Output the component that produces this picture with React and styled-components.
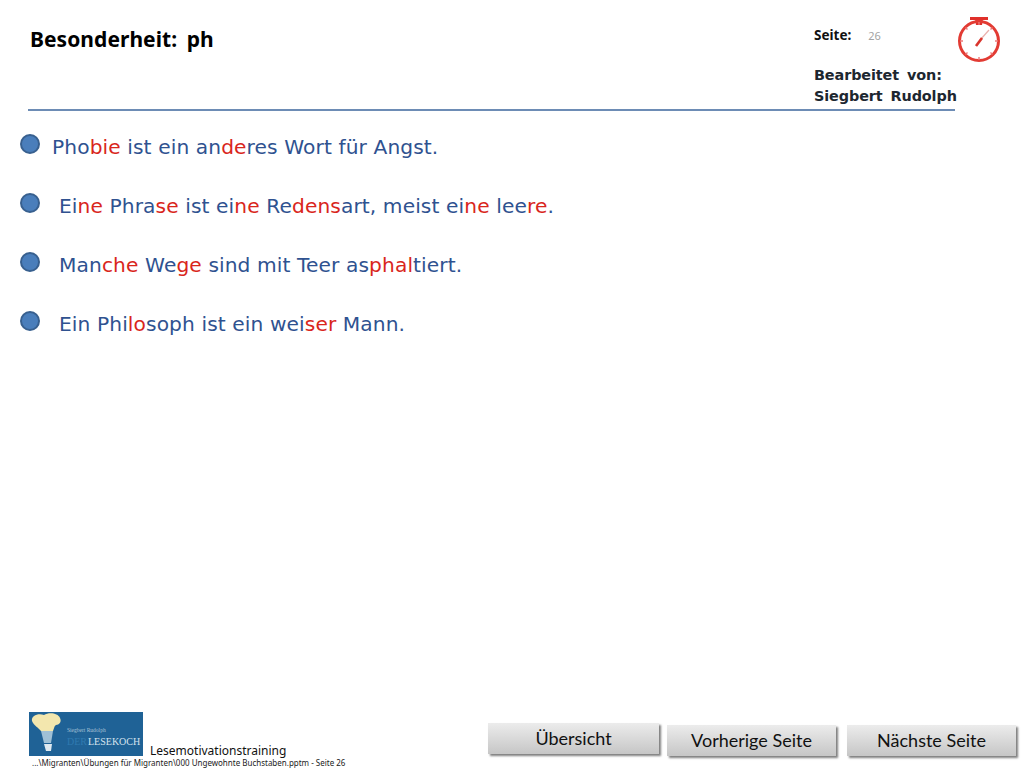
import React from "react";
import styled, { createGlobalStyle } from "styled-components";

const GlobalStyle = createGlobalStyle`
    html, body{
        margin: 0;
        padding: 0;
        background: #fff;
    }
`;

const Page = styled.div`
    display: flex;
    flex-direction: column;
    width: 1024px;
    height: 768px;
    overflow: hidden;
    font-family: "Noto Sans", "Open Sans", sans-serif;
    background: #fff;
`;

const TopBar = styled.header`
    display: flex;
    justify-content: space-between;
    height: 109px;
    padding: 0 23px 0 30px;
    box-sizing: border-box;
`;

const Title = styled.h1`
    margin: 24px 0 0;
    font-size: 21px;
    line-height: 30px;
    font-weight: 700;
    color: #000;
    word-spacing: 4px;
    letter-spacing: 0.05px;
`;

const TopRight = styled.div`
    display: flex;
    gap: 1px;
`;

const Meta = styled.div`
    display: flex;
    flex-direction: column;
    width: 142px;
    padding-top: 25px;
    box-sizing: border-box;
`;

const PageRow = styled.div`
    display: flex;
    align-items: center;
    gap: 17px;
    height: 20px;
    font-size: 13.5px;
    font-weight: 700;
    color: #111;
`;

const PageNumber = styled.span`
    font-size: 11px;
    font-weight: 400;
    color: #a3a3a3;
`;

const Author = styled.div`
    margin-top: 20px;
    font-family: "DejaVu Sans", sans-serif;
    font-size: 14.4px;
    line-height: 20.5px;
    font-weight: 700;
    word-spacing: 3px;
    letter-spacing: -0.1px;
    white-space: nowrap;
    color: #1d2730;
`;

const Timer = styled.svg`
    display: block;
    margin-top: 16px;
    width: 44px;
    height: 48px;
`;

const Rule = styled.div`
    height: 2px;
    width: 927px;
    margin-left: 28px;
    background: #6d8cb5;
`;

const Lines = styled.ul`
    display: flex;
    flex-direction: column;
    flex: 1;
    gap: 29px;
    margin: 0;
    padding: 21px 0 0 20px;
    list-style: none;
`;

const Line = styled.li`
    display: flex;
    align-items: center;
    height: 30px;
    font-family: "DejaVu Sans", sans-serif;
    font-size: 20.2px;
    letter-spacing: 0.1px;
    color: #2f5290;
    white-space: pre;
`;

const Bullet = styled.span`
    flex: none;
    width: 20px;
    height: 20px;
    margin: -6px ${(p) => p.$gap}px 0 0;
    box-sizing: border-box;
    border-radius: 50%;
    border: 2px solid #38608f;
    background: #4a7ebb;
`;

const Red = styled.span`
    color: #d9261c;
`;

const Footer = styled.footer`
    display: flex;
    justify-content: space-between;
    height: 60px;
    padding: 4px 8px 0 29px;
    box-sizing: border-box;
`;

const Brand = styled.div`
    display: grid;
    grid-template-columns: 114px auto;
    column-gap: 7px;
    align-content: start;
`;

const Logo = styled.svg`
    display: block;
    width: 114px;
    height: 44px;
`;

const BrandName = styled.span`
    align-self: end;
    font-size: 12px;
    line-height: 14px;
    color: #111;
    margin-bottom: -2px;
`;

const FilePath = styled.span`
    grid-column: 1 / 3;
    padding: 1px 0 0 3px;
    font-size: 8px;
    line-height: 12px;
    color: #222;
    white-space: nowrap;
`;

const Buttons = styled.nav`
    display: flex;
    gap: 9px;
    padding-top: 11px;
`;

const NavButton = styled.button`
    width: ${(p) => p.$width}px;
    height: 31px;
    margin-top: ${(p) => p.$top}px;
    margin-right: ${(p) => p.$after}px;
    padding: 0 0 2px;
    border: none;
    background: linear-gradient(#ececec, #c6c6c6);
    box-shadow: 2px 2px 2px #7f7f7f;
    font-family: "Lato", "Noto Sans", sans-serif;
    font-size: 18px;
    color: #111;
`;

const lines = [
    { gap: 12, text: [["Pho"], ["bie", 1], [" ist ein an"], ["de", 1], ["res Wort für Angst."]] },
    { gap: 19, text: [["Ei"], ["ne", 1], [" Phra"], ["se", 1], [" ist ei"], ["ne", 1], [" Re"], ["dens", 1], ["art, meist ei"], ["ne", 1], [" lee"], ["re", 1], ["."]] },
    { gap: 19, text: [["Man"], ["che", 1], [" We"], ["ge", 1], [" sind mit Teer as"], ["phal", 1], ["tiert."]] },
    { gap: 19, text: [["Ein Phi"], ["lo", 1], ["soph ist ein wei"], ["ser", 1], [" Mann."]] },
];

const App = () => {
    return (
        <Page>
            <GlobalStyle />
            <TopBar>
                <Title>Besonderheit: ph</Title>
                <TopRight>
                    <Meta>
                        <PageRow>
                            Seite: <PageNumber>26</PageNumber>
                        </PageRow>
                        <Author>
                            Bearbeitet von:
                            <br />
                            Siegbert Rudolph
                        </Author>
                    </Meta>
                    <Timer viewBox="0 0 44 48">
                        <rect x="13" y="1" width="18" height="3" fill="#e0302a" />
                        <path d="M18 3h8l-1 6h-6z" fill="#e0302a" />
                        <circle cx="22" cy="25" r="19.5" fill="none" stroke="#e23b33" strokeWidth="3" />
                        <path d="M22 6v3M22 41v3M3 25h3M38 25h3M8.5 11.5l2 2M35.5 11.5l-2 2M8.5 38.5l2-2M35.5 38.5l-2-2" stroke="#e77" strokeWidth="1.4" />
                        <path d="M24 23 L32 14" stroke="#eab0ac" strokeWidth="1.2" />
                        <path d="M19 30 L25 22" stroke="#d9342c" strokeWidth="2.6" />
                    </Timer>
                </TopRight>
            </TopBar>
            <Rule />
            <Lines>
                {lines.map((line, i) => (
                    <Line key={i}>
                        <Bullet $gap={line.gap} />
                        <span>
                            {line.text.map(([part, red], j) => (red ? <Red key={j}>{part}</Red> : part))}
                        </span>
                    </Line>
                ))}
            </Lines>
            <Footer>
                <Brand>
                    <Logo viewBox="0 0 114 44">
                        <rect width="114" height="44" fill="#1f6296" />
                        <path d="M3 9 C2 3 10 1 15 3 C20 0 29 1 31 6 C33 10 30 13 27 13 C25 14 25 17 24 19 L12 19 C10 16 5 14 3 9Z" fill="#f3e7ae" />
                        <path d="M12 19h12l-2 12h-7z" fill="#9fc0d6" />
                        <path d="M15 32h8l-1 7h-5z" fill="#dfe9f0" />
                        <text x="38" y="20" fontSize="5.5" fontFamily="Liberation Serif" fill="#a9c4d8">Siegbert Rudolph</text>
                        <text x="38" y="33" fontSize="10" fontFamily="Liberation Serif" fill="#2f7ab0">DER</text>
                        <text x="59" y="33" fontSize="10" fontFamily="Liberation Serif" fill="#d5e3ee">LESEKOCH</text>
                    </Logo>
                    <BrandName>Lesemotivationstraining</BrandName>
                    <FilePath>...\Migranten\Übungen für Migranten\000 Ungewohnte Buchstaben.pptm - Seite 26</FilePath>
                </Brand>
                <Buttons>
                    <NavButton $width={171} $top={0} $after={-1}>Übersicht</NavButton>
                    <NavButton $width={169} $top={2} $after={2}>Vorherige Seite</NavButton>
                    <NavButton $width={169} $top={2} $after={0}>Nächste Seite</NavButton>
                </Buttons>
            </Footer>
        </Page>
    );
};

export default App;
